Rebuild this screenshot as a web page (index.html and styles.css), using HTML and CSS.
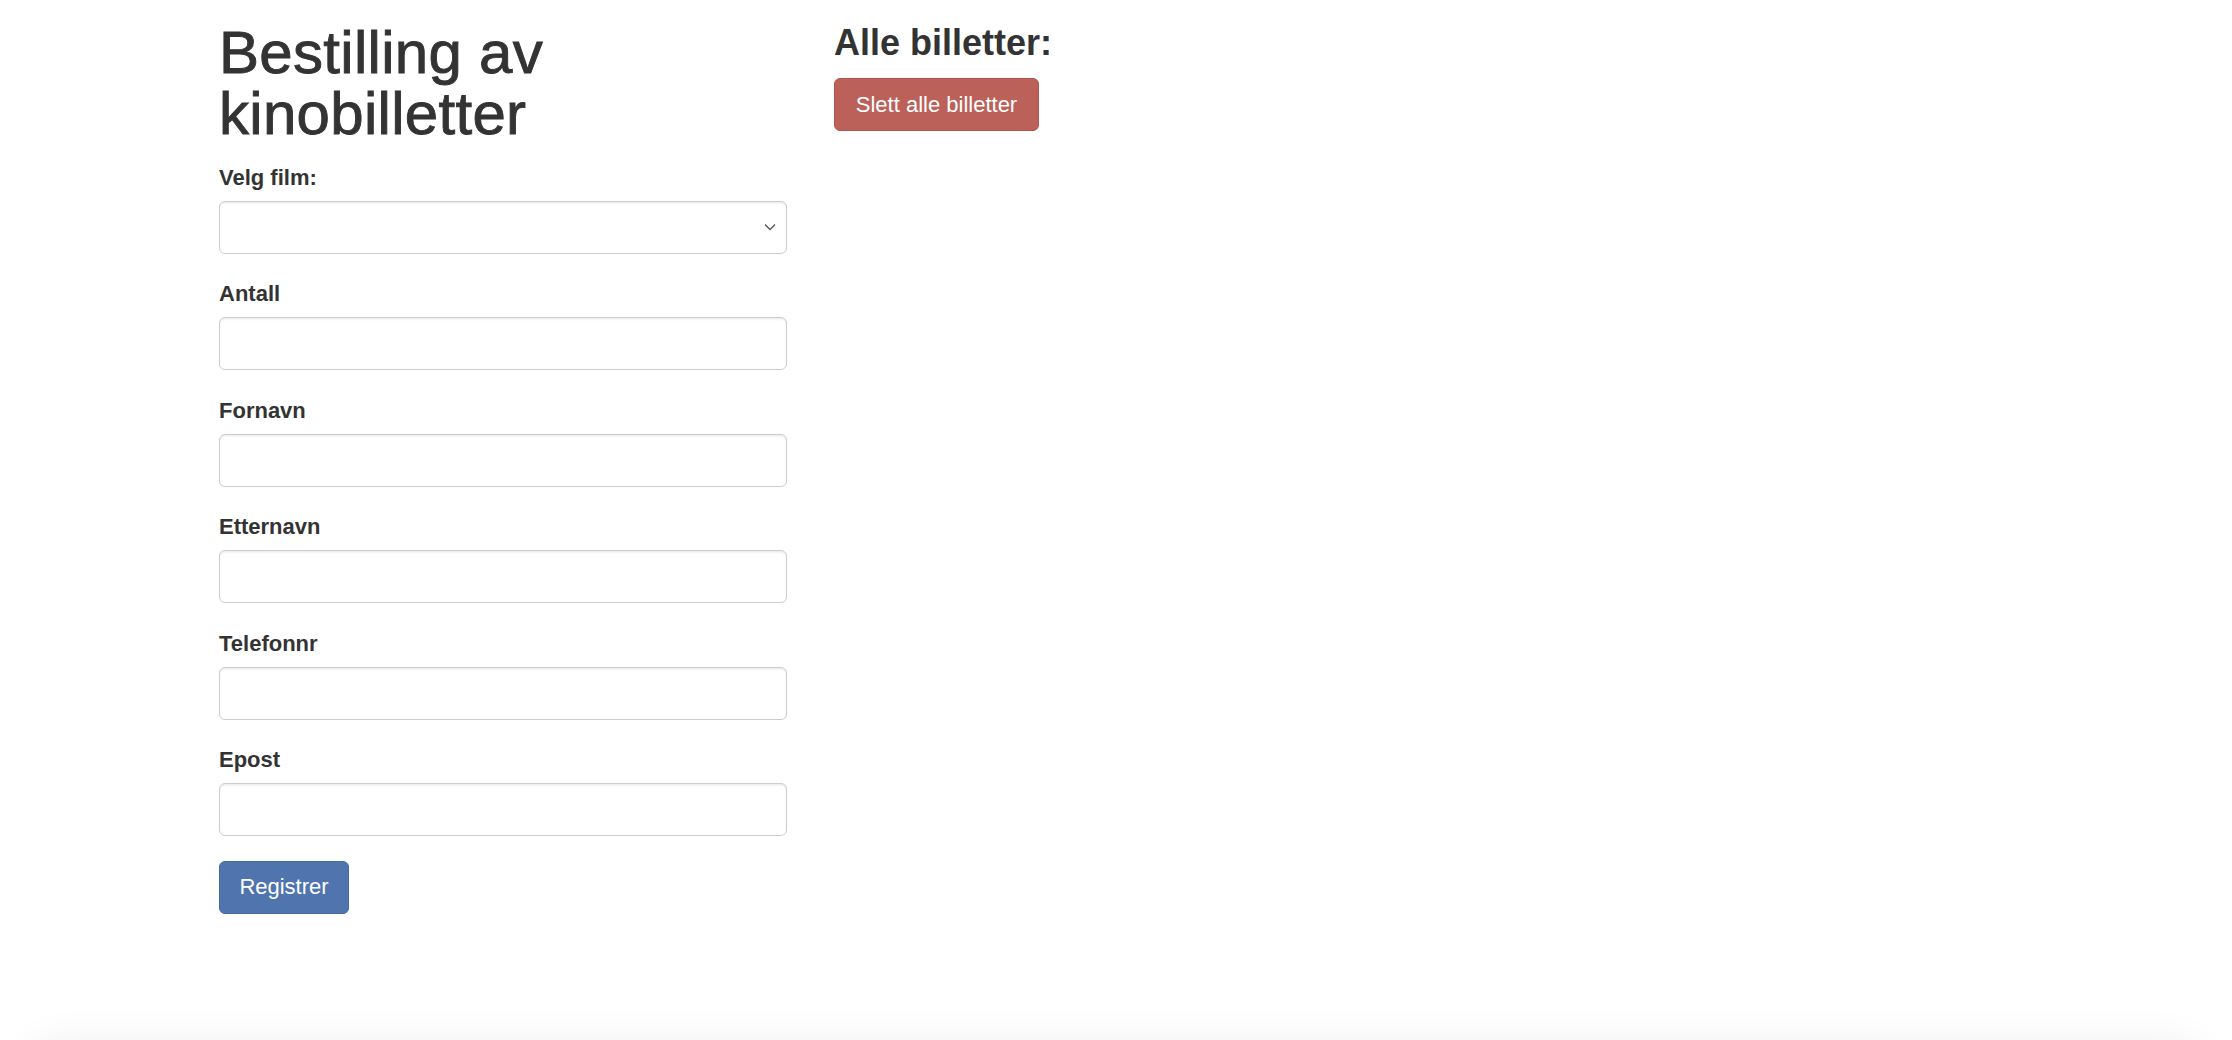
FILE: index.html
```html
<!DOCTYPE html>
<html lang="no">
<head>
<meta charset="utf-8">
<title>Bestilling av kinobilletter</title>
<link rel="stylesheet" href="styles.css">
</head>
<body>
<div class="page">
  <div class="col-form">
    <h1 class="title">Bestilling av kinobilletter</h1>
    <form class="form">
      <div class="group">
        <label class="label">Velg film:</label>
        <div class="select">
          <svg class="chev" width="12" height="8" viewBox="0 0 12 8"><path d="M1 1.5 L6 6.5 L11 1.5" fill="none" stroke="#555" stroke-width="1.3"/></svg>
        </div>
      </div>
      <div class="group">
        <label class="label">Antall</label>
        <div class="input"></div>
      </div>
      <div class="group">
        <label class="label">Fornavn</label>
        <div class="input"></div>
      </div>
      <div class="group">
        <label class="label">Etternavn</label>
        <div class="input"></div>
      </div>
      <div class="group">
        <label class="label">Telefonnr</label>
        <div class="input"></div>
      </div>
      <div class="group">
        <label class="label">Epost</label>
        <div class="input"></div>
      </div>
      <button type="button" class="btn btn-primary">Registrer</button>
    </form>
  </div>
  <div class="col-list">
    <h3 class="subtitle">Alle billetter:</h3>
    <button type="button" class="btn btn-danger">Slett alle billetter</button>
  </div>
</div>
<div class="bottom-shadow"></div>
</body>
</html>
```
FILE: styles.css
```css
html, body {
  margin: 0;
  padding: 0;
  background: #fff;
}
body {
  font-family: "Liberation Sans", Arial, sans-serif;
  color: #333;
  font-size: 22px;
  line-height: 31px;
  overflow: hidden;
  height: 1040px;
}
.page {
  display: flex;
  flex-direction: row;
  gap: 47px;
  padding-left: 219px;
}
.col-form {
  width: 568px;
}
.title {
  margin: 22px 0 17.5px;
  font-size: 60px;
  line-height: 61px;
  font-weight: 400;
  color: #333;
  -webkit-text-stroke: 0.9px #333;
  letter-spacing: 0.3px;
}
.form {
  display: flex;
  flex-direction: column;
}
.group {
  display: flex;
  flex-direction: column;
  margin-bottom: 24.5px;
}
.label {
  font-weight: 700;
  font-size: 22px;
  line-height: 31.25px;
  margin-bottom: 7.8px;
  color: #333;
}
.input, .select {
  box-sizing: border-box;
  height: 53px;
  width: 100%;
  border: 1.5px solid #ccc;
  border-radius: 6px;
  background: #fff;
  box-shadow: inset 0 1.5px 1.5px rgba(0,0,0,0.075);
}
.select {
  display: flex;
  align-items: center;
  justify-content: flex-end;
  padding-right: 10px;
}
.chev {
  display: block;
}
.btn {
  box-sizing: border-box;
  height: 53px;
  padding: 0 18px;
  border-radius: 6px;
  font-family: "Liberation Sans", Arial, sans-serif;
  font-size: 22px;
  color: #fff;
  cursor: pointer;
  align-self: flex-start;
}
.btn-primary {
  width: 130px;
  background: #5075ae;
  border: 1.5px solid #46699e;
}
.btn-danger {
  width: 205px;
  background: #bb6159;
  border: 1.5px solid #b0554d;
}
.col-list {
  display: flex;
  flex-direction: column;
}
.subtitle {
  margin: 22px 0 15px;
  font-size: 36px;
  line-height: 41px;
  font-weight: 700;
  color: #333;
}
.bottom-shadow {
  position: fixed;
  left: 40px;
  right: 40px;
  top: 1052px;
  height: 40px;
  border-radius: 40px;
  box-shadow: 0 0 40px 12px rgba(0,0,0,0.06);
}
```
